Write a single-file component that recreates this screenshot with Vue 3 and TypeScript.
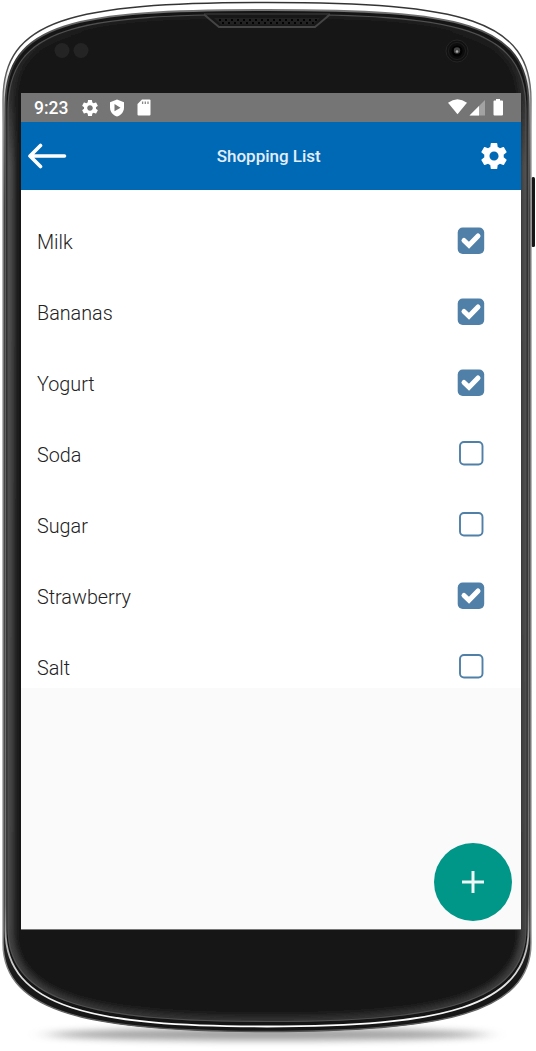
<script setup lang="ts">
import { ref } from 'vue'

interface Item {
  name: string
  done: boolean
}

const items = ref<Item[]>([
  { name: 'Milk', done: true },
  { name: 'Bananas', done: true },
  { name: 'Yogurt', done: true },
  { name: 'Soda', done: false },
  { name: 'Sugar', done: false },
  { name: 'Strawberry', done: true },
  { name: 'Salt', done: false },
])

const shell =
  'M3 100C3 20 70 2.5 267 2.5C464 2.5 531 20 531 100V943C531 1014 441 1031.5 267 1031.5C93 1031.5 3 1014 3 943Z'
const frame =
  'M5.5 105C5.5 22 75 10 267 10C459 10 528.5 22 528.5 105V930C528.5 1008 440 1026.5 267 1026.5C94 1026.5 5.5 1008 5.5 930Z'
const glass =
  'M7.500 110C7.500 25 80 14 267 14C454 14 526.500 25 526.500 110V928C526.500 1004 440 1022 267 1022C94 1022 7.500 1004 7.500 928Z'

const gear =
  'M19.43 12.98c.04-.32.07-.64.07-.98s-.03-.66-.07-.98l2.11-1.65c.19-.15.24-.42.12-.64l-2-3.46c-.12-.22-.39-.3-.61-.22l-2.49 1c-.52-.4-1.08-.73-1.69-.98l-.38-2.65A.49.49 0 0 0 14 2h-4c-.25 0-.46.18-.49.42l-.38 2.65c-.61.25-1.17.59-1.69.98l-2.49-1c-.23-.09-.49 0-.61.22l-2 3.46c-.13.22-.07.49.12.64l2.11 1.65c-.04.32-.07.65-.07.98s.03.66.07.98l-2.11 1.65c-.19.15-.24.42-.12.64l2 3.46c.12.22.39.3.61.22l2.49-1c.52.4 1.08.73 1.69.98l.38 2.65c.03.24.24.42.49.42h4c.25 0 .46-.18.49-.42l.38-2.65c.61-.25 1.17-.59 1.69-.98l2.49 1c.23.09.49 0 .61-.22l2-3.46c.12-.22.07-.49-.12-.64l-2.11-1.65zM12 15.5c-1.93 0-3.5-1.57-3.5-3.5s1.57-3.5 3.5-3.5 3.5 1.57 3.5 3.5-1.57 3.5-3.5 3.5z'
</script>

<template>
  <div class="device">
    <svg class="body" viewBox="0 0 536 1051" aria-hidden="true">
      <defs>
        <linearGradient id="rim" x1="0" y1="0" x2="0" y2="1">
          <stop offset="0" stop-color="#fff" />
          <stop offset="0.06" stop-color="#fff" />
          <stop offset="0.12" stop-color="#777" />
          <stop offset="0.2" stop-color="#333" />
          <stop offset="0.88" stop-color="#303030" />
          <stop offset="0.95" stop-color="#181818" />
          <stop offset="1" stop-color="#161616" />
        </linearGradient>
        <linearGradient id="edge" x1="0" y1="0" x2="0" y2="1">
          <stop offset="0" stop-color="#333" />
          <stop offset="0.05" stop-color="#444" />
          <stop offset="0.12" stop-color="#999" />
          <stop offset="0.9" stop-color="#999" />
          <stop offset="1" stop-color="#555" />
        </linearGradient>
        <linearGradient id="inner" x1="0" y1="0" x2="0" y2="1">
          <stop offset="0" stop-color="#777" />
          <stop offset="0.05" stop-color="#333" />
          <stop offset="0.12" stop-color="#555" />
          <stop offset="0.88" stop-color="#777" />
          <stop offset="0.95" stop-color="#ddd" />
          <stop offset="1" stop-color="#fff" />
        </linearGradient>
        <linearGradient id="sheen" x1="0" y1="0" x2="0" y2="1">
          <stop offset="0" stop-color="#1c1c1c" />
          <stop offset="0.06" stop-color="#2a2a2a" />
          <stop offset="0.15" stop-color="#5a5a5a" />
          <stop offset="0.9" stop-color="#505050" />
          <stop offset="1" stop-color="#383838" />
        </linearGradient>
        <pattern id="mesh" width="6" height="6" patternUnits="userSpaceOnUse" x="218" y="18">
          <rect width="6" height="6" fill="#222" />
          <rect x="1" y="1" width="2" height="2" fill="#030303" />
          <rect x="4" y="4" width="2" height="2" fill="#030303" />
        </pattern>
        <filter id="soft" x="-10%" y="-200%" width="120%" height="500%">
          <feGaussianBlur stdDeviation="12 3.5" />
        </filter>
        <filter id="glow"><feGaussianBlur stdDeviation="3.500" /></filter>
        <clipPath id="glass"><path :d="glass" /></clipPath>
      </defs>
      <ellipse cx="267" cy="1034.500" rx="218" ry="6" fill="#777" opacity=".7" filter="url(#soft)" />
      <rect x="531.500" y="177" width="3.500" height="70" rx="1.500" fill="#161616" />
      <path :d="shell" fill="url(#rim)" stroke="url(#edge)" stroke-width="1.400" />
      <path :d="frame" fill="#151515" stroke="url(#inner)" stroke-width="1.800" />
      <g clip-path="url(#glass)">
        <path :d="glass" fill="#141414" stroke="url(#sheen)" stroke-width="9" filter="url(#glow)" />
        <path :d="glass" fill="none" stroke="#505050" stroke-width="2.200" />
      </g>
      <path d="M204 12.500L219 26.500H315L330 12.500Z" fill="#171717" />
      <path d="M204 14H330" stroke="#333" stroke-width="1.500" />
      <path d="M204 14.500L219 27H315L330 14.500" fill="none" stroke="#444" stroke-width="2" />
      <path d="M214 18H320L313 24.500H221Z" fill="url(#mesh)" />
      <circle cx="62" cy="50.500" r="7.500" fill="#242424" />
      <circle cx="81" cy="50.500" r="7.500" fill="#242424" />
      <circle cx="457" cy="51" r="11" fill="#111" stroke="#252525" />
      <circle cx="457" cy="51" r="8.500" fill="#0d0d0d" stroke="#202020" />
      <circle cx="457" cy="51" r="5.500" fill="#020202" />
      <circle cx="457" cy="50.500" r="3.200" fill="#444" />
      <circle cx="457" cy="51.500" r="1.300" fill="#aaa" />
    </svg>

    <main class="screen">
      <div class="status">
        <span class="clock">9:23</span>
        <svg class="s-gear" viewBox="2 2 20 20"><path :d="gear" fill="#fff" /></svg>
        <svg class="s-shield" viewBox="0 0 16 18">
          <path d="M8 .5L15 3.200V8.500C15 13 12 16.200 8 17.500C4 16.200 1 13 1 8.500V3.200Z" fill="#fff" />
          <path d="M5.500 5L11.500 8.700L5.500 12.300Z" fill="#757575" />
        </svg>
        <svg class="s-card" viewBox="0 0 14 17">
          <path d="M5 .5H12.500Q13.500 .5 13.500 1.500V15.500Q13.500 16.500 12.500 16.500H1.500Q.5 16.500 .5 15.500V5Z" fill="#fff" />
          <path d="M5.600 2.500V5M8.300 2.500V5M11 2.500V5" stroke="#888" stroke-width="1.300" />
        </svg>
        <svg class="s-right" viewBox="0 0 56 18">
          <path d="M0 3.800Q9.500-3.200 19 3.800L9.500 15.200Z" fill="#fff" />
          <path d="M21.500 16.500L37 1V16.500Z" fill="#a3a3a3" />
          <path d="M21.500 16.500L31 7V16.500Z" fill="#fff" />
          <path d="M48 0H52V1.500H54Q55 1.500 55 2.500V15.500Q55 16.500 54 16.500H46.500Q45.500 16.500 45.500 15.500V2.500Q45.500 1.500 46.500 1.500H48Z" fill="#fff" />
        </svg>
      </div>

      <header class="bar">
        <svg class="back" viewBox="0 0 40 26">
          <path d="M37.500 13H3M13.500 2.500L3 13L13.500 23.500" fill="none" stroke="#fff" stroke-width="3.600" stroke-linecap="round" stroke-linejoin="round" />
        </svg>
        <h1>Shopping List</h1>
        <svg class="cog" viewBox="2 2 20 20"><path :d="gear" fill="#fff" /></svg>
      </header>

      <ul class="list">
        <li v-for="item in items" :key="item.name" @click="item.done = !item.done">
          <span>{{ item.name }}</span>
          <svg class="check" viewBox="0 0 28 28">
            <template v-if="item.done">
              <rect x=".7" y=".5" width="26.500" height="26.500" rx="5" fill="#5080a7" />
              <path d="M7 13.500L12 18.300L21 9" fill="none" stroke="#fff" stroke-width="5" stroke-linecap="round" />
            </template>
            <rect v-else x="3" y="2" width="22.500" height="22.500" rx="4" fill="#fff" stroke="#5080a7" stroke-width="1.900" />
          </svg>
        </li>
      </ul>

      <div class="rest">
        <button class="add" aria-label="Add item">
          <svg viewBox="0 0 24 24"><path d="M12 1V23M1 12H23" stroke="#eef8f6" stroke-width="3" /></svg>
        </button>
      </div>
    </main>
  </div>
</template>

<style>
body {
  background: #fff;
}
</style>

<style scoped>
.device {
  position: relative;
  box-sizing: border-box;
  width: 536px;
  height: 1051px;
  padding: 93px 16px 0 21px;
  font-family: Roboto, 'Liberation Sans', sans-serif;
  overflow: hidden;
}
.body {
  position: absolute;
  inset: 0;
  width: 536px;
  height: 1051px;
}
.screen {
  position: relative;
  box-sizing: border-box;
  display: flex;
  flex-direction: column;
  width: 499.5px;
  height: 837px;
  border-bottom: 1px solid #777;
  background: #fafafa;
}
.status {
  display: flex;
  align-items: center;
  box-sizing: border-box;
  height: 29px;
  padding: 0 17px 0 13px;
  background: #757575;
}
.clock {
  width: 48px;
  color: #fff;
  font-size: 17.5px;
  font-weight: 500;
  line-height: 29px;
  padding-top: 1px;
}
.s-gear {
  width: 16px;
  height: 16px;
}
.s-shield {
  width: 16px;
  height: 18px;
  margin-left: 11px;
}
.s-card {
  width: 14px;
  height: 17px;
  margin-left: 12px;
}
.s-right {
  width: 56px;
  height: 18px;
  margin-left: auto;
}
.bar {
  display: grid;
  grid-template-columns: 60px 1fr 60px;
  align-items: center;
  height: 68px;
  background: #0069b5;
}
.back {
  width: 40px;
  height: 26px;
  margin-left: 6px;
}
h1 {
  margin: 0 4px 0 0;
  color: #e4eefa;
  font-size: 17px;
  font-weight: 500;
  text-align: center;
}
.cog {
  width: 26px;
  height: 26px;
  justify-self: end;
  margin-right: 13.5px;
}
.list {
  margin: 0;
  padding: 15px 0 0;
  height: 483px;
  list-style: none;
  background: #fff;
  overflow: hidden;
}
li {
  display: flex;
  align-items: center;
  justify-content: space-between;
  height: 71.1px;
  padding: 0 36px 0 16px;
  color: #222;
  font-size: 19.8px;
  font-weight: 300;
}
li span {
  padding-top: 3px;
}
.check {
  width: 28px;
  height: 28px;
}
.rest {
  display: flex;
  flex: 1;
  align-items: flex-end;
  justify-content: flex-end;
  padding: 0 8.5px 8px 0;
}
.add {
  display: grid;
  place-items: center;
  width: 78px;
  height: 78px;
  padding: 0;
  border: 0;
  border-radius: 50%;
  background: #009688;
}
.add svg {
  width: 24px;
  height: 24px;
}
</style>
